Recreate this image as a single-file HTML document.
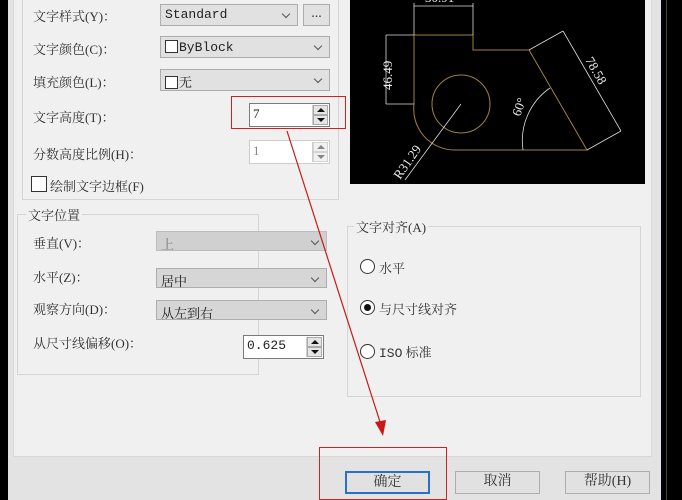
<!DOCTYPE html>
<html><head><meta charset="utf-8"><style>
*{margin:0;padding:0;box-sizing:border-box}
body{width:682px;height:500px;background:#000;position:relative;overflow:hidden;font-family:"Liberation Serif","Noto Serif CJK SC","WenQuanYi Zen Hei",serif;font-size:13px;color:#222}
.a{position:absolute}
.lbl{position:absolute;font-size:13px;color:#333;white-space:nowrap}
.cb{position:absolute;background:#e1e1e1;border:1px solid #adadad;font-size:13px;padding:2px 0 0 4px;white-space:nowrap}
.cb.dis{background:#d0d0d0;color:#777;border-color:#bdbdbd}
.cb:after{content:"";position:absolute;right:8px;top:6px;width:5px;height:5px;border-right:1px solid #555;border-bottom:1px solid #555;transform:rotate(45deg)}
.sq{display:inline-block;width:13px;height:13px;border:1px solid #333;vertical-align:-2px;margin-right:1px;background:#fff}
.inp{position:absolute;background:#fff;border:1px solid #7a7a7a;font-size:13px;padding:2px 3px}
.spin{position:absolute;right:1px;top:1px;width:16px;border-left:1px solid #ccc}
.spin div{height:10px;background:#e5e5e5;border:1px solid #aaa;position:relative}
.up:after{content:"";position:absolute;left:3px;top:2px;border:4px solid transparent;border-bottom:4px solid #111;border-top:0}
.dn:after{content:"";position:absolute;left:3px;top:2px;border:4px solid transparent;border-top:4px solid #111;border-bottom:0}
.grp{position:absolute;border:1px solid #d5d5d5}
.gt{position:absolute;background:#f0f0f0;padding:0 2px;font-size:13px;color:#333}
.rad{position:absolute;width:15px;height:15px;border:1px solid #333;border-radius:50%;background:#fff}
.btn{position:absolute;background:#e1e1e1;border:1px solid #adadad;text-align:center;font-size:14px;line-height:20px;color:#333}
</style></head><body>
<div class="a" style="left:8px;top:0;width:653px;height:500px;background:#e3e3e3"></div>
<div class="a" style="left:13px;top:0;width:639px;height:457px;background:#f0f0f0;border:1px solid #d8d8d8;border-top:0"></div>
<div class="a" style="left:666px;top:0;width:1px;height:500px;background:#4a4a2a"></div>
<div class="grp" style="left:22px;top:-2px;width:317px;height:202px"></div>

<div class="lbl" style="left:33px;top:6px">文字样式(Y)：</div>
<div class="cb" style="left:160px;top:4px;width:138px;height:22px;font-family:'Liberation Mono',monospace">Standard</div>
<div class="btn" style="left:303px;top:4px;width:27px;height:22px;line-height:18px">...</div>
<div class="lbl" style="left:33px;top:39px">文字颜色(C)：</div>
<div class="cb" style="left:160px;top:36px;width:170px;height:22px"><span class="sq"></span><span style="font-family:'Liberation Mono',monospace">ByBlock</span></div>
<div class="lbl" style="left:33px;top:72px">填充颜色(L)：</div>
<div class="cb" style="left:160px;top:69px;width:170px;height:22px"><span class="sq"></span>无</div>
<div class="lbl" style="left:33px;top:107px">文字高度(T)：</div>
<div class="inp" style="left:249px;top:103px;width:81px;height:24px">7<div class="spin"><div class="up"></div><div class="dn"></div></div></div>
<div class="lbl" style="left:33px;top:144px">分数高度比例(H)：</div>
<div class="inp" style="left:249px;top:140px;width:81px;height:24px;border-color:#ccc;color:#888">1<div class="spin"><div class="up" style="opacity:.5"></div><div class="dn" style="opacity:.5"></div></div></div>
<div class="a" style="left:31px;top:176px;width:16px;height:16px;border:1px solid #333;background:#fff"></div>
<div class="lbl" style="left:50px;top:176px">绘制文字边框(F)</div>

<div class="grp" style="left:17px;top:214px;width:242px;height:161px"></div>
<div class="gt" style="left:26px;top:205px">文字位置</div>
<div class="lbl" style="left:33px;top:233px">垂直(V)：</div>
<div class="cb dis" style="left:156px;top:231px;width:171px;height:20px">上</div>
<div class="lbl" style="left:33px;top:267px">水平(Z)：</div>
<div class="cb" style="left:156px;top:268px;width:171px;height:20px;background:#d6d6d6">居中</div>
<div class="lbl" style="left:33px;top:299px">观察方向(D)：</div>
<div class="cb" style="left:156px;top:300px;width:171px;height:20px;background:#d6d6d6">从左到右</div>
<div class="lbl" style="left:33px;top:333px">从尺寸线偏移(O)：</div>
<div class="inp" style="left:243px;top:335px;width:81px;height:24px;font-family:'Liberation Mono',monospace">0.625<div class="spin"><div class="up"></div><div class="dn"></div></div></div>

<div class="grp" style="left:347px;top:226px;width:294px;height:171px"></div>
<div class="gt" style="left:354px;top:217px">文字对齐(A)</div>
<div class="rad" style="left:360px;top:259px"></div>
<div class="lbl" style="left:379px;top:258px">水平</div>
<div class="rad" style="left:360px;top:300px"></div>
<div class="a" style="left:364px;top:304px;width:7px;height:7px;border-radius:50%;background:#111"></div>
<div class="lbl" style="left:379px;top:299px">与尺寸线对齐</div>
<div class="rad" style="left:360px;top:344px"></div>
<div class="lbl" style="left:379px;top:342px"><span style="font-family:'Liberation Mono',monospace">ISO</span> 标准</div>

<svg class="a" style="left:350px;top:0" width="295" height="184" viewBox="350 0 295 184">
<rect x="350" y="0" width="295" height="184" fill="#000"/>
<g fill="none" stroke="#a08040" stroke-width="1">
<path d="M414,35 L473,35 L473,50 L529,50 L587,150 L455,150 A41,41 0 0 1 414,104 Z"/>
<circle cx="461" cy="104" r="29"/>
</g>
<g fill="none" stroke="#ddd" stroke-width="0.8">
<path d="M386,35 L386,104 M386,35 L414,35 M386,104 L414,104"/>
<path d="M414,6 L473,6 M414,3 L414,35 M473,3 L473,35"/>
<path d="M563,31 L621,131 M529,50 L563,31 M587,150 L621,131"/>
<path d="M523,150 A64,64 0 0 1 550,88"/>
<path d="M461,104 L405,180"/>
</g>
<g fill="#eee" font-family="Liberation Serif,serif" font-size="13">
<text x="0" y="0" transform="translate(392,90) rotate(-90)">46.49</text>
<text x="0" y="0" transform="translate(585,60) rotate(60)">78.58</text>
<text x="0" y="0" transform="translate(520,117) rotate(-70)">60°</text>
<text x="0" y="0" transform="translate(400,180) rotate(-55)">R31.29</text>
<text x="425" y="2">30.91</text>
</g>
</svg>

<div class="btn" style="left:345px;top:471px;width:85px;height:23px;border:2px solid #2a70c8">确定</div>
<div class="btn" style="left:455px;top:471px;width:85px;height:23px">取消</div>
<div class="btn" style="left:565px;top:471px;width:85px;height:23px">帮助(H)</div>

<div class="a" style="left:231px;top:96px;width:115px;height:33px;border:1px solid #d02020"></div>
<div class="a" style="left:319px;top:447px;width:128px;height:53px;border:1px solid #d02020"></div>
<svg class="a" style="left:0;top:0" width="682" height="500">
<line x1="287" y1="131" x2="381" y2="425" stroke="#c81818" stroke-width="1.2"/>
<polygon points="375,422 386,420 383,436" fill="#c81818"/>
</svg>
</body></html>
